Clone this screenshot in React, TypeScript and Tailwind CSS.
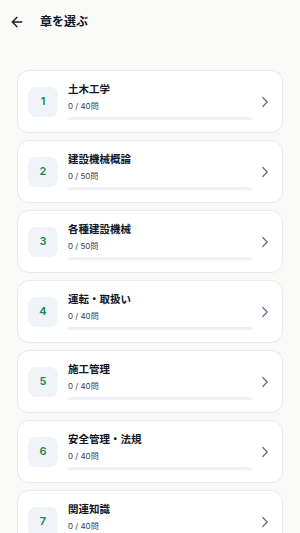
import React from "react";
import { ArrowLeft, ChevronRight } from "lucide-react";

const chapters = [
  { n: 1, title: "土木工学", total: 40 },
  { n: 2, title: "建設機械概論", total: 50 },
  { n: 3, title: "各種建設機械", total: 50 },
  { n: 4, title: "運転・取扱い", total: 40 },
  { n: 5, title: "施工管理", total: 40 },
  { n: 6, title: "安全管理・法規", total: 40 },
  { n: 7, title: "関連知識", total: 40 },
];

export default function App() {
  return (
    <div
      className="min-h-screen bg-[#f9f9f8] text-[#111827]"
      style={{ fontFamily: '"Inter","Noto Sans CJK JP",sans-serif' }}
    >
      <header className="flex h-[44px] items-center pl-[9px]">
        <ArrowLeft size={16} strokeWidth={2} className="text-[#111827]" />
        <h1 className="ml-[15px] text-[12px] font-bold leading-none">章を選ぶ</h1>
      </header>
      <div className="flex flex-col gap-[7px] px-[17px] pt-[26px] pb-4">
        {chapters.map((c) => (
          <div
            key={c.n}
            className="flex h-[63px] items-center rounded-[12px] border border-[#e6e9ef] bg-white pl-[10px] pr-[8px]"
          >
            <div className="flex h-[30px] w-[30px] shrink-0 items-center justify-center rounded-[8px] bg-[#f0f3f8] text-[11px] font-semibold text-[#178a4c]">
              {c.n}
            </div>
            <div className="ml-[10px] mr-[4px] flex min-w-0 flex-1 flex-col">
              <div className="text-[10.5px] font-semibold leading-[14px] text-[#111827]">
                {c.title}
              </div>
              <div className="mt-[4px] text-[8px] leading-[10px] text-[#374151]">
                0 / {c.total}問
              </div>
              <div className="mt-[6px] h-[3px] w-full rounded-full bg-[#eef1f6]" />
            </div>
            <ChevronRight size={18} strokeWidth={1.8} className="shrink-0 text-[#64748b]" />
          </div>
        ))}
      </div>
    </div>
  );
}
